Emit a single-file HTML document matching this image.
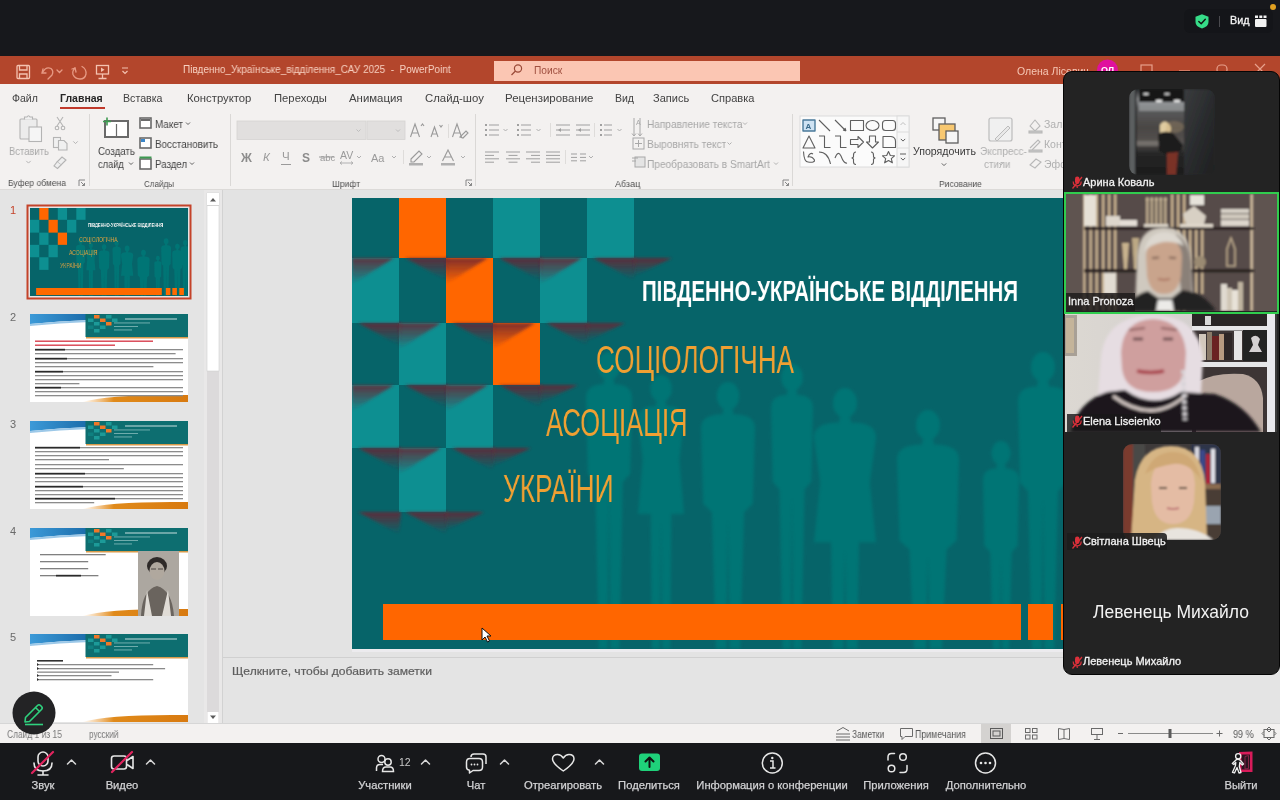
<!DOCTYPE html>
<html><head><meta charset="utf-8"><title>PowerPoint - Zoom</title>
<style>
*{margin:0;padding:0;box-sizing:border-box}
html,body{width:1280px;height:800px;overflow:hidden;background:#16161a;font-family:"Liberation Sans", sans-serif}
.r{position:absolute}
.t{position:absolute;white-space:nowrap;line-height:1;font-family:"Liberation Sans", sans-serif;will-change:transform}
</style></head><body>
<div class="r" style="left:0px;top:0px;width:1280px;height:56px;background:#17181c;"></div>
<div class="r" style="left:0px;top:56px;width:1280px;height:28px;background:#b3462c;"></div>
<div class="r" style="left:0px;top:84px;width:1280px;height:106px;background:#f3f1f0;"></div>
<div class="r" style="left:0px;top:189px;width:1280px;height:1px;background:#dcdad8;"></div>
<div class="r" style="left:0px;top:190px;width:1280px;height:535px;background:#e3e3e3;"></div>
<div class="r" style="left:0px;top:190px;width:221px;height:535px;background:#e4e4e4;"></div>
<div class="r" style="left:222px;top:657px;width:1058px;height:67px;background:#e4e4e4;"></div>
<div class="r" style="left:222px;top:657px;width:1058px;height:1px;background:#d0d0d0;"></div>
<div class="r" style="left:0px;top:743px;width:1280px;height:57px;background:#17181b;"></div>
<svg class="r" style="left:0;top:0" width="1280" height="56"><rect x="1184" y="9" width="89" height="24" rx="6" fill="#141519"/><path d="M1202 14.3 L1208.5 16.8 L1208.5 22 Q1208.5 26.5 1202 28.5 Q1195.5 26.5 1195.5 22 L1195.5 16.8 Z" fill="#36dc88"/><path d="M1198.8 21.5 L1201.2 23.8 L1205.3 19.2" fill="none" stroke="#111" stroke-width="1.4" stroke-linecap="round" stroke-linejoin="round"/><rect x="1219" y="16" width="1" height="11" fill="#4a4a4e"/><g fill="#f2f2f2"><rect x="1255" y="19" width="11.5" height="8" rx="1"/><rect x="1255" y="15.5" width="3" height="2.5"/><rect x="1259.3" y="15.5" width="3" height="2.5"/><rect x="1263.5" y="15.5" width="3" height="2.5"/></g><circle cx="1273" cy="7" r="3" fill="#e0a020"/></svg>
<div class="t" style="left:1229.6px;top:15.46px;font-size:10.8px;color:#f4f4f4;-webkit-text-stroke:0.3px #f4f4f4;">Вид</div>
<svg class="r" style="left:0;top:56px" width="1280" height="28" viewBox="0 56 1280 28"><g fill="none" stroke="#f4c2b0" stroke-width="1.3"><rect x="17" y="65.5" width="12.5" height="13" rx="1"/><path d="M19.5 65.5 L19.5 70 L27 70 L27 65.5 M19.5 78.5 L19.5 74 L27 74 L27 78.5"/></g><g fill="none" stroke="#e79a84" stroke-width="1.3" stroke-linecap="round"><path d="M43 69 L42 73 L46 73"/><path d="M42.5 72.5 Q46 66 51 68.5 Q54 71 52 75 L48 79"/><path d="M57 70 L59.5 72.5 L62 70"/></g><g fill="none" stroke="#e79a84" stroke-width="1.3" stroke-linecap="round"><path d="M75 68 Q72 71 73 74.5 Q75 79 80 79 Q85 79 86 74 Q86.5 69 82 66.5"/><path d="M75 68 L76 72 M75 68 L72 69"/></g><g fill="none" stroke="#f4c2b0" stroke-width="1.3"><rect x="96.5" y="65.5" width="12" height="8.5"/><path d="M102.5 74 L102.5 78 M98.5 78.5 L106.5 78.5"/></g><path d="M101 67.5 L104.5 69.7 L101 72 Z" fill="#f4c2b0"/><path d="M122 68 L128 68 M122.5 71 L125 73.5 L127.5 71" fill="none" stroke="#f4c2b0" stroke-width="1.2"/><rect x="494" y="61" width="306" height="20" fill="#fbc6b3"/><g fill="none" stroke="#9a4a38" stroke-width="1.2"><circle cx="518" cy="68.5" r="3.6"/><path d="M515.5 71 L511.5 75"/></g><circle cx="1107.5" cy="70" r="10.5" fill="#e0109e"/><g fill="none" stroke="#e7a08c" stroke-width="1.2"><rect x="1141" y="65" width="11" height="9"/><path d="M1179 71 L1190 71"/><rect x="1217" y="65" width="10" height="9" rx="4"/><path d="M1255 64 L1265 74 M1265 64 L1255 74"/></g></svg>
<div class="t" style="left:183px;top:65.33px;font-size:10px;color:#f7d0c0;transform:scaleX(0.9954407294832828);transform-origin:0 0;">Південно_Українське_відділення_САУ 2025&nbsp; -&nbsp; PowerPoint</div>
<div class="t" style="left:534px;top:65.87px;font-size:10.2px;color:#a05040;">Поиск</div>
<div class="t" style="left:1016.8px;top:65.71px;font-size:10.5px;color:#f6c8b6;">Олена Лісевич</div>
<div class="t" style="left:1100.5px;top:66.38px;font-size:9px;color:#ffffff;font-weight:bold;">ОЛ</div>
<div class="t" style="left:12px;top:93.01px;font-size:10.5px;color:#424242;">Файл</div>
<div class="t" style="left:60.3px;top:93.01px;font-size:10.5px;color:#262626;font-weight:bold;transform:scaleX(0.9976580796252927);transform-origin:0 0;">Главная</div>
<div class="t" style="left:123.2px;top:93.01px;font-size:10.5px;color:#424242;transform:scaleX(1.0128205128205128);transform-origin:0 0;">Вставка</div>
<div class="t" style="left:186.5px;top:93.01px;font-size:10.5px;color:#424242;transform:scaleX(1.0751252086811354);transform-origin:0 0;">Конструктор</div>
<div class="t" style="left:273.8px;top:93.01px;font-size:10.5px;color:#424242;transform:scaleX(1.073170731707317);transform-origin:0 0;">Переходы</div>
<div class="t" style="left:348.9px;top:93.01px;font-size:10.5px;color:#424242;transform:scaleX(1.0851926977687627);transform-origin:0 0;">Анимация</div>
<div class="t" style="left:425.1px;top:93.01px;font-size:10.5px;color:#424242;transform:scaleX(1.0808823529411764);transform-origin:0 0;">Слайд-шоу</div>
<div class="t" style="left:504.7px;top:93.01px;font-size:10.5px;color:#424242;transform:scaleX(1.091245376078915);transform-origin:0 0;">Рецензирование</div>
<div class="t" style="left:614.6px;top:93.01px;font-size:10.5px;color:#424242;transform:scaleX(0.9842105263157894);transform-origin:0 0;">Вид</div>
<div class="t" style="left:653.2px;top:93.01px;font-size:10.5px;color:#424242;transform:scaleX(1.0492753623188407);transform-origin:0 0;">Запись</div>
<div class="t" style="left:710.5px;top:93.01px;font-size:10.5px;color:#424242;transform:scaleX(1.0558252427184465);transform-origin:0 0;">Справка</div>
<div class="r" style="left:60px;top:107px;width:44.5px;height:2px;background:#c0392b;"></div>
<svg class="r" style="left:0;top:0" width="1280" height="200"><rect x="89" y="114" width="1" height="72" fill="#dad8d6"/><rect x="230" y="114" width="1" height="72" fill="#dad8d6"/><rect x="475" y="114" width="1" height="72" fill="#dad8d6"/><rect x="792" y="114" width="1" height="72" fill="#dad8d6"/><g fill="#ececec" stroke="#b4b4b4" stroke-width="1.1"><rect x="20" y="119" width="17" height="20" rx="1"/><rect x="29" y="127" width="12.5" height="14.5" fill="#f5f5f5"/></g><path d="M24.5 119.5 L24.5 117 L27 117 Q28.5 114.5 30 117 L32.5 117 L32.5 119.5" fill="#f0f0f0" stroke="#b4b4b4" stroke-width="1.1"/><path d="M26.3 160.9 L28.5 163.1 L30.7 160.9" fill="none" stroke="#b4b4b4" stroke-width="1"/><g fill="none" stroke="#b4b4b4" stroke-width="1.1"><path d="M57 117 L63 126 M63 117 L57 126"/><circle cx="57" cy="128" r="1.8"/><circle cx="63" cy="128" r="1.8"/></g><g fill="#f0f0f0" stroke="#b4b4b4" stroke-width="1.1"><rect x="53.5" y="137.5" width="7" height="10"/><path d="M58.5 140.5 L64 140.5 L67 143.5 L67 150 L58.5 150 Z"/></g><path d="M73.3 141.4 L75.5 143.6 L77.7 141.4" fill="none" stroke="#b4b4b4" stroke-width="1"/><g fill="#eeeeee" stroke="#b4b4b4" stroke-width="1.1"><path d="M62 157 L66 160 L61 165 L57 162 Z"/><path d="M57 162 L54 166 L57.5 168.5 L61 165"/></g><g fill="none" stroke="#7a7a7a" stroke-width="0.9"><path d="M79 186 L79 180 L85 180"/><path d="M81 182 L84.5 185.5 M84.5 183 L84.5 185.5 L82 185.5"/></g><g fill="#ffffff" stroke="#6a6a6a" stroke-width="2"><rect x="105" y="121" width="23" height="16"/></g><path d="M116.5 124 L116.5 136" stroke="#6a6a6a" stroke-width="1.2"/><path d="M103 121.5 L111 121.5 M107 117.5 L107 125.5" stroke="#3d9a50" stroke-width="1.6"/><path d="M129 162.5 L131 164.5 L133 162.5" fill="none" stroke="#5f5f5f" stroke-width="1"/><g fill="#ffffff" stroke="#6a6a6a" stroke-width="1.6"><rect x="140" y="118" width="11" height="10"/></g><rect x="141" y="119" width="9" height="2" fill="#6a6a6a"/><g fill="#ffffff" stroke="#6a6a6a" stroke-width="1.6"><rect x="140" y="138" width="11" height="10"/></g><path d="M141 139 L145 139 L145 142 L141 142 Z" fill="#3a86c8"/><g fill="#ffffff" stroke="#6a6a6a" stroke-width="1.6"><rect x="140" y="159" width="11" height="10"/></g><rect x="139.5" y="156.5" width="12" height="2" fill="#3d9a50"/><path d="M186 122.5 L188 124.5 L190 122.5" fill="none" stroke="#5f5f5f" stroke-width="1"/><path d="M190 162.5 L192 164.5 L194 162.5" fill="none" stroke="#5f5f5f" stroke-width="1"/><rect x="237" y="121" width="129" height="18.5" fill="#e1dfde" stroke="#d5d3d1" stroke-width="0.8"/><rect x="367" y="121" width="38" height="18.5" fill="#e1dfde" stroke="#d5d3d1" stroke-width="0.8"/><path d="M356.5 129.5 L358.5 131.5 L360.5 129.5" fill="none" stroke="#bdbdbd" stroke-width="1"/><path d="M396 129.5 L398 131.5 L400 129.5" fill="none" stroke="#bdbdbd" stroke-width="1"/><g fill="none" stroke="#9a9a9a" stroke-width="1.1"><path d="M410.5 137 L415 124 L419.5 137 M412 133 L418 133"/><path d="M421 126 L422.5 124 L424 126"/><path d="M431 137 L434.5 127 L438 137 M432.2 134 L436.8 134"/><path d="M439.5 125 L441 127 L442.5 125"/><path d="M452.5 137 L457 124 L461.5 137 M454 133 L460 133"/><path d="M460 137 L466 131 L468 133 L463 138 Z"/></g><rect x="448" y="124" width="1" height="14" fill="#dedcda"/><rect x="403" y="150" width="1" height="14" fill="#dedcda"/></svg>
<div class="t" style="left:241px;top:151.84px;font-size:12px;color:#8c8c8c;font-weight:bold;">Ж</div>
<div class="t" style="left:263px;top:152.27px;font-size:11.5px;color:#9a9a9a;font-style:italic;">К</div>
<div class="t" style="left:282px;top:151.27px;font-size:11.5px;color:#9a9a9a;">Ч</div>
<div class="t" style="left:302px;top:151.84px;font-size:12px;color:#8c8c8c;font-weight:bold;">S</div>
<div class="t" style="left:320px;top:152.96px;font-size:9.5px;color:#9a9a9a;">abc</div>
<div class="t" style="left:340px;top:150.11px;font-size:10.5px;color:#9a9a9a;">AV</div>
<div class="t" style="left:371px;top:152.69px;font-size:11px;color:#9a9a9a;">Aa</div>
<div class="t" style="left:647px;top:119.11px;font-size:10.5px;color:#a6a6a6;transform:scaleX(0.9591836734693877);transform-origin:0 0;">Направление текста</div>
<div class="t" style="left:647px;top:139.11px;font-size:10.5px;color:#a6a6a6;transform:scaleX(0.968944099378882);transform-origin:0 0;">Выровнять текст</div>
<div class="t" style="left:647px;top:159.11px;font-size:10.5px;color:#a6a6a6;transform:scaleX(0.9647058823529412);transform-origin:0 0;">Преобразовать в SmartArt</div>
<svg class="r" style="left:0;top:0" width="1280" height="200"><path d="M281 164.5 L291 164.5" stroke="#9a9a9a" stroke-width="1"/><path d="M319 157 L334 157" stroke="#9a9a9a" stroke-width="1"/><path d="M340 163 L353 163 M340 163 L342 161.5 M340 163 L342 164.5 M353 163 L351 161.5 M353 163 L351 164.5" stroke="#aaa" stroke-width="0.9"/><path d="M357 156.0 L359 158.0 L361 156.0" fill="none" stroke="#b0b0b0" stroke-width="1"/><path d="M392 156.0 L394 158.0 L396 156.0" fill="none" stroke="#b0b0b0" stroke-width="1"/><g fill="none" stroke="#9a9a9a" stroke-width="1.1"><path d="M411 159 L419 151 L422 154 L414 162 L411 162 Z"/></g><rect x="409" y="163" width="14" height="2.5" fill="#b0b0b0"/><path d="M427 156.0 L429 158.0 L431 156.0" fill="none" stroke="#b0b0b0" stroke-width="1"/><path d="M442.5 161 L448 150 L453.5 161 M444.5 157 L451.5 157" fill="none" stroke="#9a9a9a" stroke-width="1.1"/><rect x="441" y="163" width="14" height="2.5" fill="#b0b0b0"/><path d="M461 156.0 L463 158.0 L465 156.0" fill="none" stroke="#b0b0b0" stroke-width="1"/><g fill="none" stroke="#7a7a7a" stroke-width="0.9"><path d="M466 186 L466 180 L472 180"/><path d="M468 182 L471.5 185.5 M471.5 183 L471.5 185.5 L469 185.5"/></g><rect x="485" y="124" width="2" height="2" fill="#a0a0a0"/><rect x="489" y="124.5" width="10" height="1" fill="#a0a0a0"/><rect x="485" y="129" width="2" height="2" fill="#a0a0a0"/><rect x="489" y="129.5" width="10" height="1" fill="#a0a0a0"/><rect x="485" y="134" width="2" height="2" fill="#a0a0a0"/><rect x="489" y="134.5" width="10" height="1" fill="#a0a0a0"/><path d="M503.5 129.0 L505.5 131.0 L507.5 129.0" fill="none" stroke="#b0b0b0" stroke-width="1"/><rect x="517" y="124" width="2" height="2" fill="#a0a0a0"/><rect x="521" y="124.5" width="10" height="1" fill="#a0a0a0"/><rect x="517" y="129" width="2" height="2" fill="#a0a0a0"/><rect x="521" y="129.5" width="10" height="1" fill="#a0a0a0"/><rect x="517" y="134" width="2" height="2" fill="#a0a0a0"/><rect x="521" y="134.5" width="10" height="1" fill="#a0a0a0"/><path d="M536.5 129.0 L538.5 131.0 L540.5 129.0" fill="none" stroke="#b0b0b0" stroke-width="1"/><rect x="550" y="123" width="1" height="14" fill="#dedcda"/><rect x="556" y="124.5" width="14" height="1" fill="#a0a0a0"/><rect x="556" y="129.5" width="14" height="1" fill="#a0a0a0"/><rect x="556" y="134.5" width="14" height="1" fill="#a0a0a0"/><rect x="576" y="124.5" width="14" height="1" fill="#a0a0a0"/><rect x="576" y="129.5" width="14" height="1" fill="#a0a0a0"/><rect x="576" y="134.5" width="14" height="1" fill="#a0a0a0"/><path d="M558 130 L561 128 L561 132 Z M578 130 L581 128 L581 132 Z" fill="#a0a0a0"/><rect x="594" y="123" width="1" height="14" fill="#dedcda"/><rect x="600" y="124" width="2" height="2" fill="#a0a0a0"/><rect x="604" y="124.5" width="8" height="1" fill="#a0a0a0"/><rect x="600" y="129" width="2" height="2" fill="#a0a0a0"/><rect x="604" y="129.5" width="8" height="1" fill="#a0a0a0"/><rect x="600" y="134" width="2" height="2" fill="#a0a0a0"/><rect x="604" y="134.5" width="8" height="1" fill="#a0a0a0"/><path d="M617.5 129.0 L619.5 131.0 L621.5 129.0" fill="none" stroke="#b0b0b0" stroke-width="1"/><rect x="485" y="151.5" width="14" height="1" fill="#a0a0a0"/><rect x="485" y="154.9" width="9" height="1" fill="#a0a0a0"/><rect x="485" y="158.3" width="14" height="1" fill="#a0a0a0"/><rect x="485" y="161.7" width="9" height="1" fill="#a0a0a0"/><rect x="506.0" y="151.5" width="14" height="1" fill="#a0a0a0"/><rect x="508.5" y="154.9" width="9" height="1" fill="#a0a0a0"/><rect x="506.0" y="158.3" width="14" height="1" fill="#a0a0a0"/><rect x="508.5" y="161.7" width="9" height="1" fill="#a0a0a0"/><rect x="526" y="151.5" width="14" height="1" fill="#a0a0a0"/><rect x="531" y="154.9" width="9" height="1" fill="#a0a0a0"/><rect x="526" y="158.3" width="14" height="1" fill="#a0a0a0"/><rect x="531" y="161.7" width="9" height="1" fill="#a0a0a0"/><rect x="546" y="151.5" width="14" height="1" fill="#a0a0a0"/><rect x="546" y="154.9" width="14" height="1" fill="#a0a0a0"/><rect x="546" y="158.3" width="14" height="1" fill="#a0a0a0"/><rect x="546" y="161.7" width="14" height="1" fill="#a0a0a0"/><rect x="565" y="150" width="1" height="14" fill="#dedcda"/><rect x="571" y="153.5" width="6" height="1" fill="#a0a0a0"/><rect x="571" y="156.9" width="6" height="1" fill="#a0a0a0"/><rect x="571" y="160.3" width="6" height="1" fill="#a0a0a0"/><rect x="580" y="153.5" width="6" height="1" fill="#a0a0a0"/><rect x="580" y="156.9" width="6" height="1" fill="#a0a0a0"/><rect x="580" y="160.3" width="6" height="1" fill="#a0a0a0"/><path d="M589 156.0 L591 158.0 L593 156.0" fill="none" stroke="#b0b0b0" stroke-width="1"/><g fill="none" stroke="#a8a8a8" stroke-width="1"><path d="M634 118 L634 136 M632 133.5 L634 136 L636 133.5 M640 118 L640 136 M638 133.5 L640 136 L642 133.5"/><rect x="633" y="138" width="11" height="11"/><path d="M638.5 140 L638.5 147 M635 143.5 L642 143.5"/><rect x="635" y="157" width="10" height="10" fill="#e4e4e4"/><path d="M632 158 L638 158 M632 161 L636 161"/></g><text x="636" y="125" font-family="Liberation Sans" font-size="7" fill="#a8a8a8">A</text><path d="M743 122.5 L745 124.5 L747 122.5" fill="none" stroke="#b0b0b0" stroke-width="1"/><path d="M727.5 142.5 L729.5 144.5 L731.5 142.5" fill="none" stroke="#b0b0b0" stroke-width="1"/><path d="M774 162.5 L776 164.5 L778 162.5" fill="none" stroke="#b0b0b0" stroke-width="1"/><g fill="none" stroke="#7a7a7a" stroke-width="0.9"><path d="M783 186 L783 180 L789 180"/><path d="M785 182 L788.5 185.5 M788.5 183 L788.5 185.5 L786 185.5"/></g><rect x="800" y="116" width="109" height="51" fill="#fbfbfb" stroke="#dcdcdc" stroke-width="1"/><rect x="897" y="116" width="12" height="51" fill="#f6f6f6" stroke="#dcdcdc" stroke-width="1"/><path d="M897 132 L909 132 M897 148 L909 148" stroke="#dcdcdc"/><path d="M900.5 125 L903 122.5 L905.5 125" fill="none" stroke="#c0c0c0"/><path d="M900.8 138.9 L903 141.1 L905.2 138.9" fill="none" stroke="#5f5f5f" stroke-width="1"/><path d="M900.8 157.9 L903 160.1 L905.2 157.9" fill="none" stroke="#5f5f5f" stroke-width="1"/><rect x="900" y="153.5" width="6" height="1" fill="#5f5f5f"/><g fill="none" stroke="#5f5f5f" stroke-width="1.1" stroke-linejoin="round"><rect x="803" y="120" width="12" height="11" fill="#cfe3f3" stroke="#4a7a9a" stroke-width="1.4"/><path d="M819 120 L830 131"/><path d="M835 120 L846 131 M846 131 L843 130 M846 131 L845 128"/><rect x="850.5" y="120.5" width="13" height="10"/><ellipse cx="872.5" cy="125.5" rx="6.5" ry="5"/><rect x="882.5" y="120.5" width="13" height="10" rx="3"/><path d="M803 148 L809 136 L815 148 Z"/><path d="M819 136 L824.5 136 L824.5 147.5 L830.5 147.5"/><path d="M835 136 L840.5 136 L840.5 147.5 L846.5 147.5"/><path d="M850.5 139.5 L858 139.5 L858 136.5 L863.5 142 L858 147.5 L858 144.5 L850.5 144.5 Z"/><path d="M869.5 136 L875.5 136 L875.5 142 L878.5 142 L872.5 148 L866.5 142 L869.5 142 Z"/><path d="M883 136.5 L891 136.5 Q895.5 137 895.5 141.5 L895.5 147.5 L883 147.5 Z"/><path d="M803.5 151.5 Q804 162 808 162 Q815 163 814.5 160 Q812 156 808 157 Q810 152 813 154"/><path d="M819 152 Q828 152 830.5 164"/><path d="M835 158 Q838 150 841 156 Q844 164 847 163"/><path d="M856 152 Q853.5 152 853.5 155 L853.5 157 L852 158 L853.5 159 L853.5 162 Q853.5 164.5 856 164.5"/><path d="M871 152 Q873.5 152 873.5 155 L873.5 157 L875 158 L873.5 159 L873.5 162 Q873.5 164.5 871 164.5"/><path d="M888.5 151.5 L890.3 155.5 L894.5 155.8 L891.3 158.6 L892.4 162.8 L888.5 160.5 L884.6 162.8 L885.7 158.6 L882.5 155.8 L886.7 155.5 Z"/></g><text x="805.5" y="129" font-family="Liberation Sans" font-weight="bold" font-size="8" fill="#3a6a8a">A</text><g stroke="#5f5f5f" stroke-width="1.3"><rect x="933" y="118" width="12" height="12" fill="#f6f6f6"/><rect x="939" y="124" width="16" height="16" fill="#f8c870"/><rect x="946" y="131" width="12" height="12" fill="#f6f6f6"/></g><path d="M941.8 163.4 L944 165.6 L946.2 163.4" fill="none" stroke="#5f5f5f" stroke-width="1"/><g fill="#f0f0f0" stroke="#bcbcbc" stroke-width="1.2"><rect x="989" y="118" width="23" height="23" rx="2"/></g><path d="M995 139 L1008 126 L1010 128 L997 141 Z" fill="#e8e8e8" stroke="#bcbcbc"/><path d="M999 163.0 L1001 165.0 L1003 163.0" fill="none" stroke="#c0c0c0" stroke-width="1"/><g fill="none" stroke="#b8b8b8" stroke-width="1.1"><path d="M1030 126 L1035 120 L1040 126 L1035 131 Z"/><rect x="1029" y="131" width="13" height="2" fill="#c8c8c8"/><path d="M1030 148 L1038 140 L1040 142 L1032 150"/><rect x="1029" y="150" width="13" height="2" fill="#c8c8c8"/><path d="M1030 165 L1036 159 L1041 162 L1035 168 Z"/></g></svg>
<div class="t" style="left:9px;top:145.61px;font-size:10.5px;color:#a9a9a9;transform:scaleX(0.896551724137931);transform-origin:0 0;">Вставить</div>
<div class="t" style="left:8px;top:178.46px;font-size:9.5px;color:#505050;transform:scaleX(0.8978328173374613);transform-origin:0 0;">Буфер обмена</div>
<div class="t" style="left:97.6px;top:146.11px;font-size:10.5px;color:#444444;transform:scaleX(0.9262086513994912);transform-origin:0 0;">Создать</div>
<div class="t" style="left:98px;top:159.11px;font-size:10.5px;color:#444444;transform:scaleX(0.8813559322033898);transform-origin:0 0;">слайд</div>
<div class="t" style="left:155px;top:119.11px;font-size:10.5px;color:#444444;transform:scaleX(0.9395973154362416);transform-origin:0 0;">Макет</div>
<div class="t" style="left:155px;top:139.41px;font-size:10.5px;color:#444444;transform:scaleX(0.9375);transform-origin:0 0;">Восстановить</div>
<div class="t" style="left:155px;top:159.11px;font-size:10.5px;color:#444444;transform:scaleX(0.9253731343283582);transform-origin:0 0;">Раздел</div>
<div class="t" style="left:144px;top:178.96px;font-size:9.5px;color:#505050;transform:scaleX(0.8474576271186441);transform-origin:0 0;">Слайды</div>
<div class="t" style="left:332px;top:178.96px;font-size:9.5px;color:#505050;transform:scaleX(0.8974358974358975);transform-origin:0 0;">Шрифт</div>
<div class="t" style="left:615px;top:178.96px;font-size:9.5px;color:#505050;transform:scaleX(0.946969696969697);transform-origin:0 0;">Абзац</div>
<div class="t" style="left:913px;top:146.11px;font-size:10.5px;color:#3a3a3a;transform:scaleX(1.0064935064935066);transform-origin:0 0;">Упорядочить</div>
<div class="t" style="left:980px;top:146.11px;font-size:10.5px;color:#b0b0b0;transform:scaleX(0.9615384615384616);transform-origin:0 0;">Экспресс-</div>
<div class="t" style="left:984px;top:159.11px;font-size:10.5px;color:#b0b0b0;transform:scaleX(0.9454545454545454);transform-origin:0 0;">стили</div>
<div class="t" style="left:939px;top:178.96px;font-size:9.5px;color:#505050;transform:scaleX(0.8958333333333334);transform-origin:0 0;">Рисование</div>
<div class="t" style="left:1044px;top:119.11px;font-size:10.5px;color:#b0b0b0;">Заливка</div>
<div class="t" style="left:1044px;top:139.11px;font-size:10.5px;color:#b0b0b0;">Контур</div>
<div class="t" style="left:1044px;top:159.11px;font-size:10.5px;color:#b0b0b0;">Эффекты</div>
<svg class="r" style="left:352px;top:198px;" width="802" height="451" viewBox="0 0 802 451"><defs><linearGradient id="sh" x1="0" y1="0" x2="0" y2="1"><stop offset="0" stop-color="#6a2432" stop-opacity="0.85"/><stop offset="1" stop-color="#6a2432" stop-opacity="0"/></linearGradient><linearGradient id="shd" x1="0" y1="0" x2="1" y2="1"><stop offset="0" stop-color="#6a2a20" stop-opacity="0.9"/><stop offset="0.6" stop-color="#6a2a20" stop-opacity="0"/></linearGradient><filter id="bl" x="-20%" y="-20%" width="140%" height="140%"><feGaussianBlur stdDeviation="1.6"/></filter><filter id="bl2" x="-20%" y="-30%" width="140%" height="160%"><feGaussianBlur stdDeviation="1.8"/></filter></defs><rect width="802" height="451" fill="#066469"/><g fill="#047575" filter="url(#bl)"><ellipse cx="257" cy="168.0" rx="11.2" ry="14.0"/><path d="M252.5 179.2 L261.5 179.2 L262.6 186.2 Q280.0 186.2 280.0 200.2 L278.2 275.8 L270.8 284.2 L267.4 451 L258.4 451 L257.0 289.8 L255.6 451 L246.7 451 L243.2 284.2 L235.8 275.8 L234.0 200.2 Q234.0 186.2 251.4 186.2 Z"/><ellipse cx="309" cy="190.5" rx="10.8" ry="13.5"/><path d="M304.7 201.3 L313.3 201.3 L314.4 208.1 Q332.0 208.1 332.0 221.6 L327.4 262.1 L332.0 316.1 L319.4 316.1 L318.2 451 L310.1 451 L309.0 321.5 L307.9 451 L299.8 451 L298.6 316.1 L286.0 316.1 L290.6 262.1 L286.0 221.6 Q286.0 208.1 303.6 208.1 Z"/><ellipse cx="376" cy="198.0" rx="11.2" ry="14.0"/><path d="M371.5 209.2 L380.5 209.2 L381.6 216.2 Q403.0 216.2 403.0 230.2 L400.8 305.8 L392.2 314.2 L388.1 451 L377.6 451 L376.0 319.8 L374.4 451 L363.9 451 L359.8 314.2 L351.2 305.8 L349.0 230.2 Q349.0 216.2 370.4 216.2 Z"/><ellipse cx="440" cy="179.5" rx="10.8" ry="13.5"/><path d="M435.7 190.3 L444.3 190.3 L445.4 197.1 Q461.0 197.1 461.0 210.6 L459.3 283.5 L452.6 291.6 L449.4 451 L441.3 451 L440.0 297.0 L438.7 451 L430.6 451 L427.4 291.6 L420.7 283.5 L419.0 210.6 Q419.0 197.1 434.6 197.1 Z"/><ellipse cx="493" cy="205.0" rx="12.0" ry="15.0"/><path d="M488.2 217.0 L497.8 217.0 L499.0 224.5 Q524.0 224.5 524.0 239.5 L517.8 284.5 L524.0 344.5 L506.9 344.5 L505.4 451 L494.6 451 L493.0 350.5 L491.4 451 L480.6 451 L479.1 344.5 L462.0 344.5 L468.2 284.5 L462.0 239.5 Q462.0 224.5 487.0 224.5 Z"/><ellipse cx="576" cy="227.0" rx="12.0" ry="15.0"/><path d="M571.2 239.0 L580.8 239.0 L582.0 246.5 Q607.0 246.5 607.0 261.5 L604.5 342.5 L594.6 351.5 L590.0 451 L577.9 451 L576.0 357.5 L574.1 451 L562.0 451 L557.4 351.5 L547.5 342.5 L545.0 261.5 Q545.0 246.5 570.0 246.5 Z"/><ellipse cx="649" cy="255.0" rx="9.6" ry="12.0"/><path d="M645.2 264.6 L652.8 264.6 L653.8 270.6 Q667.0 270.6 667.0 282.6 L665.6 347.4 L659.8 354.6 L657.1 451 L650.1 451 L649.0 359.4 L647.9 451 L640.9 451 L638.2 354.6 L632.4 347.4 L631.0 282.6 Q631.0 270.6 644.2 270.6 Z"/><ellipse cx="691" cy="169.0" rx="12.0" ry="15.0"/><path d="M686.2 181.0 L695.8 181.0 L697.0 188.5 Q716.0 188.5 716.0 203.5 L714.0 284.5 L706.0 293.5 L702.2 451 L692.5 451 L691.0 299.5 L689.5 451 L679.8 451 L676.0 293.5 L668.0 284.5 L666.0 203.5 Q666.0 188.5 685.0 188.5 Z"/><ellipse cx="748" cy="196.0" rx="11.2" ry="14.0"/><path d="M743.5 207.2 L752.5 207.2 L753.6 214.2 Q774.0 214.2 774.0 228.2 L771.9 303.8 L763.6 312.2 L759.7 451 L749.6 451 L748.0 317.8 L746.4 451 L736.3 451 L732.4 312.2 L724.1 303.8 L722.0 228.2 Q722.0 214.2 742.4 214.2 Z"/><ellipse cx="788" cy="176.0" rx="11.2" ry="14.0"/><path d="M783.5 187.2 L792.5 187.2 L793.6 194.2 Q811.0 194.2 811.0 208.2 L809.2 283.8 L801.8 292.2 L798.4 451 L789.4 451 L788.0 297.8 L786.6 451 L777.6 451 L774.2 292.2 L766.8 283.8 L765.0 208.2 Q765.0 194.2 782.4 194.2 Z"/></g><rect x="141" y="0" width="47" height="60" fill="#0d8f91"/><rect x="235" y="0" width="47" height="60" fill="#0d8f91"/><rect x="0" y="60" width="47" height="65" fill="#0d8f91"/><rect x="188" y="60" width="47" height="65" fill="#0d8f91"/><rect x="47" y="125" width="47" height="62" fill="#0d8f91"/><rect x="0" y="187" width="47" height="63" fill="#0d8f91"/><rect x="94" y="187" width="47" height="63" fill="#0d8f91"/><rect x="47" y="250" width="47" height="64" fill="#0d8f91"/><rect x="47" y="0" width="47" height="60" fill="#ff6600"/><rect x="94" y="60" width="47" height="65" fill="#ff6600"/><rect x="141" y="125" width="47" height="62" fill="#ff6600"/><path d="M0 60 L42 60 L0 86 Z" fill="url(#sh)" filter="url(#bl2)"/><path d="M53 60 L96 60 L94 82 Z" fill="url(#sh)" filter="url(#bl2)"/><path d="M94 60 L136 60 L94 86 Z" fill="url(#sh)" filter="url(#bl2)"/><path d="M147 60 L190 60 L188 82 Z" fill="url(#sh)" filter="url(#bl2)"/><path d="M188 60 L230 60 L188 86 Z" fill="url(#sh)" filter="url(#bl2)"/><path d="M241 60 L284 60 L282 82 Z" fill="url(#sh)" filter="url(#bl2)"/><path d="M282 60 L320 60 L282 78 Z" fill="url(#sh)" filter="url(#bl2)"/><path d="M6 125 L49 125 L47 147 Z" fill="url(#sh)" filter="url(#bl2)"/><path d="M47 125 L89 125 L47 151 Z" fill="url(#sh)" filter="url(#bl2)"/><path d="M100 125 L143 125 L141 147 Z" fill="url(#sh)" filter="url(#bl2)"/><path d="M141 125 L183 125 L141 151 Z" fill="url(#sh)" filter="url(#bl2)"/><path d="M194 125 L237 125 L235 147 Z" fill="url(#sh)" filter="url(#bl2)"/><path d="M235 125 L273 125 L235 143 Z" fill="url(#sh)" filter="url(#bl2)"/><path d="M0 187 L42 187 L0 213 Z" fill="url(#sh)" filter="url(#bl2)"/><path d="M53 187 L96 187 L94 209 Z" fill="url(#sh)" filter="url(#bl2)"/><path d="M94 187 L136 187 L94 213 Z" fill="url(#sh)" filter="url(#bl2)"/><path d="M147 187 L190 187 L188 209 Z" fill="url(#sh)" filter="url(#bl2)"/><path d="M188 187 L226 187 L188 205 Z" fill="url(#sh)" filter="url(#bl2)"/><path d="M6 250 L49 250 L47 272 Z" fill="url(#sh)" filter="url(#bl2)"/><path d="M47 250 L89 250 L47 276 Z" fill="url(#sh)" filter="url(#bl2)"/><path d="M100 250 L143 250 L141 272 Z" fill="url(#sh)" filter="url(#bl2)"/><path d="M141 250 L179 250 L141 268 Z" fill="url(#sh)" filter="url(#bl2)"/><path d="M6 314 L49 314 L47 336 Z" fill="url(#sh)" filter="url(#bl2)"/><path d="M53 314 L96 314 L94 336 Z" fill="url(#sh)" filter="url(#bl2)"/><path d="M94 314 L132 314 L94 332 Z" fill="url(#sh)" filter="url(#bl2)"/><rect x="31" y="406" width="638" height="36" fill="#ff6600"/><rect x="676" y="406" width="25" height="36" fill="#ff6600"/><rect x="709" y="406" width="25" height="36" fill="#ff6600"/><rect x="742" y="406" width="25" height="36" fill="#ff6600"/></svg>
<div class="t" style="left:642px;top:276.31px;font-size:30px;color:#ffffff;font-weight:bold;transform:scaleX(0.6810360441948922);transform-origin:0 0;">ПІВДЕННО-УКРАЇНСЬКЕ ВІДДІЛЕННЯ</div>
<div class="t" style="left:596px;top:340.83px;font-size:38px;color:#f0a032;transform:scaleX(0.6882168925964547);transform-origin:0 0;">СОЦІОЛОГІЧНА</div>
<div class="t" style="left:545.5px;top:403.83px;font-size:38px;color:#f0a032;transform:scaleX(0.6712523719165086);transform-origin:0 0;">АСОЦІАЦІЯ</div>
<div class="t" style="left:502.5px;top:469.83px;font-size:38px;color:#f0a032;transform:scaleX(0.6914893617021276);transform-origin:0 0;">УКРАЇНИ</div>
<svg class="r" style="left:481px;top:627px" width="12" height="16" viewBox="0 0 12 16"><path d="M1 1 L1 13 L4 10 L6.5 15 L8.5 14 L6 9 L10 9 Z" fill="#ffffff" stroke="#111" stroke-width="1"/></svg>
<div class="r" style="left:352px;top:649px;width:711px;height:3px;background:#ecebee;"></div>
<svg class="r" style="left:0;top:0" width="240" height="745"><defs><linearGradient id="bw" x1="0" x2="1"><stop offset="0" stop-color="#3c9ad8"/><stop offset="1" stop-color="#1a6aa8"/></linearGradient><linearGradient id="ow" x1="0" x2="1"><stop offset="0" stop-color="#f0a040" stop-opacity="0"/><stop offset="0.3" stop-color="#e08a1a"/><stop offset="1" stop-color="#d87a10"/></linearGradient></defs><rect x="27.5" y="205.5" width="163" height="93" fill="none" stroke="#c4432a" stroke-width="2"/><rect x="30" y="208" width="158" height="88" fill="#066469"/><rect x="57.78" y="208.00" width="9.26" height="11.82" fill="#0d8f91"/><rect x="76.30" y="208.00" width="9.26" height="11.82" fill="#0d8f91"/><rect x="30.00" y="219.82" width="9.26" height="12.81" fill="#0d8f91"/><rect x="67.04" y="219.82" width="9.26" height="12.81" fill="#0d8f91"/><rect x="39.26" y="232.63" width="9.26" height="12.21" fill="#0d8f91"/><rect x="30.00" y="244.84" width="9.26" height="12.41" fill="#0d8f91"/><rect x="48.52" y="244.84" width="9.26" height="12.41" fill="#0d8f91"/><rect x="39.26" y="257.25" width="9.26" height="12.61" fill="#0d8f91"/><rect x="39.26" y="208.00" width="9.26" height="11.82" fill="#ff6600"/><rect x="48.52" y="219.82" width="9.26" height="12.81" fill="#ff6600"/><rect x="57.78" y="232.63" width="9.26" height="12.21" fill="#ff6600"/><clipPath id="tc1"><rect x="30" y="208" width="158" height="88"/></clipPath><g clip-path="url(#tc1)"><g transform="translate(30,208) scale(0.1970)"><g fill="#047575" filter="url(#bl)"><ellipse cx="257" cy="168.0" rx="11.2" ry="14.0"/><path d="M252.5 179.2 L261.5 179.2 L262.6 186.2 Q280.0 186.2 280.0 200.2 L278.2 275.8 L270.8 284.2 L267.4 451 L258.4 451 L257.0 289.8 L255.6 451 L246.7 451 L243.2 284.2 L235.8 275.8 L234.0 200.2 Q234.0 186.2 251.4 186.2 Z"/><ellipse cx="309" cy="190.5" rx="10.8" ry="13.5"/><path d="M304.7 201.3 L313.3 201.3 L314.4 208.1 Q332.0 208.1 332.0 221.6 L327.4 262.1 L332.0 316.1 L319.4 316.1 L318.2 451 L310.1 451 L309.0 321.5 L307.9 451 L299.8 451 L298.6 316.1 L286.0 316.1 L290.6 262.1 L286.0 221.6 Q286.0 208.1 303.6 208.1 Z"/><ellipse cx="376" cy="198.0" rx="11.2" ry="14.0"/><path d="M371.5 209.2 L380.5 209.2 L381.6 216.2 Q403.0 216.2 403.0 230.2 L400.8 305.8 L392.2 314.2 L388.1 451 L377.6 451 L376.0 319.8 L374.4 451 L363.9 451 L359.8 314.2 L351.2 305.8 L349.0 230.2 Q349.0 216.2 370.4 216.2 Z"/><ellipse cx="440" cy="179.5" rx="10.8" ry="13.5"/><path d="M435.7 190.3 L444.3 190.3 L445.4 197.1 Q461.0 197.1 461.0 210.6 L459.3 283.5 L452.6 291.6 L449.4 451 L441.3 451 L440.0 297.0 L438.7 451 L430.6 451 L427.4 291.6 L420.7 283.5 L419.0 210.6 Q419.0 197.1 434.6 197.1 Z"/><ellipse cx="493" cy="205.0" rx="12.0" ry="15.0"/><path d="M488.2 217.0 L497.8 217.0 L499.0 224.5 Q524.0 224.5 524.0 239.5 L517.8 284.5 L524.0 344.5 L506.9 344.5 L505.4 451 L494.6 451 L493.0 350.5 L491.4 451 L480.6 451 L479.1 344.5 L462.0 344.5 L468.2 284.5 L462.0 239.5 Q462.0 224.5 487.0 224.5 Z"/><ellipse cx="576" cy="227.0" rx="12.0" ry="15.0"/><path d="M571.2 239.0 L580.8 239.0 L582.0 246.5 Q607.0 246.5 607.0 261.5 L604.5 342.5 L594.6 351.5 L590.0 451 L577.9 451 L576.0 357.5 L574.1 451 L562.0 451 L557.4 351.5 L547.5 342.5 L545.0 261.5 Q545.0 246.5 570.0 246.5 Z"/><ellipse cx="649" cy="255.0" rx="9.6" ry="12.0"/><path d="M645.2 264.6 L652.8 264.6 L653.8 270.6 Q667.0 270.6 667.0 282.6 L665.6 347.4 L659.8 354.6 L657.1 451 L650.1 451 L649.0 359.4 L647.9 451 L640.9 451 L638.2 354.6 L632.4 347.4 L631.0 282.6 Q631.0 270.6 644.2 270.6 Z"/><ellipse cx="691" cy="169.0" rx="12.0" ry="15.0"/><path d="M686.2 181.0 L695.8 181.0 L697.0 188.5 Q716.0 188.5 716.0 203.5 L714.0 284.5 L706.0 293.5 L702.2 451 L692.5 451 L691.0 299.5 L689.5 451 L679.8 451 L676.0 293.5 L668.0 284.5 L666.0 203.5 Q666.0 188.5 685.0 188.5 Z"/><ellipse cx="748" cy="196.0" rx="11.2" ry="14.0"/><path d="M743.5 207.2 L752.5 207.2 L753.6 214.2 Q774.0 214.2 774.0 228.2 L771.9 303.8 L763.6 312.2 L759.7 451 L749.6 451 L748.0 317.8 L746.4 451 L736.3 451 L732.4 312.2 L724.1 303.8 L722.0 228.2 Q722.0 214.2 742.4 214.2 Z"/><ellipse cx="788" cy="176.0" rx="11.2" ry="14.0"/><path d="M783.5 187.2 L792.5 187.2 L793.6 194.2 Q811.0 194.2 811.0 208.2 L809.2 283.8 L801.8 292.2 L798.4 451 L789.4 451 L788.0 297.8 L786.6 451 L777.6 451 L774.2 292.2 L766.8 283.8 L765.0 208.2 Q765.0 194.2 782.4 194.2 Z"/></g></g></g><rect x="36.11" y="287.99" width="125.69" height="7.09" fill="#ff6a00"/><rect x="165.8" y="287.99" width="4.6" height="7.09" fill="#ff6a00"/><rect x="172.3" y="287.99" width="4.6" height="7.09" fill="#ff6a00"/><rect x="179.3" y="287.99" width="4.6" height="7.09" fill="#ff6a00"/><rect x="30" y="314" width="158" height="88" fill="#ffffff"/><path d="M30 314 L90 314 L90 320 Q60 321 30 324 Z" fill="url(#bw)"/><path d="M30 324 Q60 321 90 320 L90 322 Q60 323 30 326 Z" fill="#9cc8e8"/><rect x="85.5" y="314" width="102.5" height="23" fill="#0d6e70"/><rect x="86" y="337" width="102" height="1.5" fill="#d89a4a"/><rect x="94" y="315" width="5.5" height="3.5" fill="#f07828"/><rect x="100" y="318.5" width="5.5" height="3.5" fill="#f07828"/><rect x="106" y="322" width="5.5" height="3.5" fill="#f07828"/><rect x="88" y="318.5" width="5.5" height="3.5" fill="#1c9a98"/><rect x="94" y="322" width="5.5" height="3.5" fill="#1c9a98"/><rect x="100" y="325.5" width="5.5" height="3.5" fill="#1c9a98"/><rect x="88" y="325.5" width="5.5" height="3.5" fill="#0f8080"/><rect x="94" y="329" width="5.5" height="3.5" fill="#1c9a98"/><rect x="106" y="315" width="5.5" height="3.5" fill="#1c9a98"/><rect x="112" y="318.5" width="5.5" height="3.5" fill="#1c9a98"/><rect x="125" y="318.5" width="52" height="1" fill="#c8dede"/><rect x="114" y="322.5" width="36" height="0.9" fill="#7ab4b4"/><rect x="114" y="326" width="24" height="0.9" fill="#7ab4b4"/><rect x="114" y="329.5" width="18" height="0.9" fill="#7ab4b4"/><path d="M82 402 Q110 394 188 395 L188 402 Z" fill="url(#ow)"/><rect x="35" y="340.5" width="118" height="1.4" fill="#d8404e"/><rect x="35" y="344.5" width="80" height="1.4" fill="#d8404e"/><rect x="35" y="349.0" width="148.0" height="1.3" fill="#8c8c8c"/><rect x="35" y="353.0" width="140.6" height="1.3" fill="#8c8c8c"/><rect x="35" y="358.0" width="148.0" height="1.3" fill="#8c8c8c"/><rect x="35" y="362.0" width="148.0" height="1.3" fill="#8c8c8c"/><rect x="35" y="366.0" width="118.4" height="1.3" fill="#8c8c8c"/><rect x="35" y="371.0" width="148.0" height="1.3" fill="#8c8c8c"/><rect x="35" y="375.0" width="148.0" height="1.3" fill="#8c8c8c"/><rect x="35" y="379.0" width="148.0" height="1.3" fill="#8c8c8c"/><rect x="35" y="383.0" width="44.4" height="1.3" fill="#8c8c8c"/><rect x="35" y="387.0" width="148.0" height="1.3" fill="#8c8c8c"/><rect x="35" y="391.0" width="148.0" height="1.3" fill="#8c8c8c"/><rect x="35" y="395.0" width="148.0" height="1.3" fill="#8c8c8c"/><rect x="35" y="348.8" width="30" height="1.7" fill="#2a2a2a"/><rect x="35" y="357.8" width="32" height="1.7" fill="#2a2a2a"/><rect x="35" y="370.8" width="28" height="1.7" fill="#2a2a2a"/><rect x="35" y="386.8" width="26" height="1.7" fill="#2a2a2a"/><rect x="30" y="421" width="158" height="88" fill="#ffffff"/><path d="M30 421 L90 421 L90 427 Q60 428 30 431 Z" fill="url(#bw)"/><path d="M30 431 Q60 428 90 427 L90 429 Q60 430 30 433 Z" fill="#9cc8e8"/><rect x="85.5" y="421" width="102.5" height="23" fill="#0d6e70"/><rect x="86" y="444" width="102" height="1.5" fill="#d89a4a"/><rect x="94" y="422" width="5.5" height="3.5" fill="#f07828"/><rect x="100" y="425.5" width="5.5" height="3.5" fill="#f07828"/><rect x="106" y="429" width="5.5" height="3.5" fill="#f07828"/><rect x="88" y="425.5" width="5.5" height="3.5" fill="#1c9a98"/><rect x="94" y="429" width="5.5" height="3.5" fill="#1c9a98"/><rect x="100" y="432.5" width="5.5" height="3.5" fill="#1c9a98"/><rect x="88" y="432.5" width="5.5" height="3.5" fill="#0f8080"/><rect x="94" y="436" width="5.5" height="3.5" fill="#1c9a98"/><rect x="106" y="422" width="5.5" height="3.5" fill="#1c9a98"/><rect x="112" y="425.5" width="5.5" height="3.5" fill="#1c9a98"/><rect x="125" y="425.5" width="52" height="1" fill="#c8dede"/><rect x="114" y="429.5" width="36" height="0.9" fill="#7ab4b4"/><rect x="114" y="433" width="24" height="0.9" fill="#7ab4b4"/><rect x="114" y="436.5" width="18" height="0.9" fill="#7ab4b4"/><path d="M82 509 Q110 501 188 502 L188 509 Z" fill="url(#ow)"/><rect x="35" y="447.0" width="148.0" height="1.3" fill="#8c8c8c"/><rect x="35" y="451.0" width="148.0" height="1.3" fill="#8c8c8c"/><rect x="35" y="455.0" width="148.0" height="1.3" fill="#8c8c8c"/><rect x="35" y="459.0" width="74.0" height="1.3" fill="#8c8c8c"/><rect x="35" y="464.0" width="148.0" height="1.3" fill="#8c8c8c"/><rect x="35" y="468.0" width="88.8" height="1.3" fill="#8c8c8c"/><rect x="35" y="473.0" width="148.0" height="1.3" fill="#8c8c8c"/><rect x="35" y="477.0" width="148.0" height="1.3" fill="#8c8c8c"/><rect x="35" y="481.0" width="148.0" height="1.3" fill="#8c8c8c"/><rect x="35" y="486.0" width="148.0" height="1.3" fill="#8c8c8c"/><rect x="35" y="490.0" width="148.0" height="1.3" fill="#8c8c8c"/><rect x="35" y="494.0" width="148.0" height="1.3" fill="#8c8c8c"/><rect x="35" y="498.0" width="148.0" height="1.3" fill="#8c8c8c"/><rect x="35" y="502.0" width="59.2" height="1.3" fill="#8c8c8c"/><rect x="35" y="446.8" width="45" height="1.7" fill="#2a2a2a"/><rect x="35" y="472.8" width="50" height="1.7" fill="#2a2a2a"/><rect x="35" y="485.8" width="48" height="1.7" fill="#2a2a2a"/><rect x="35" y="497.8" width="80" height="1.7" fill="#2a2a2a"/><rect x="30" y="528" width="158" height="88" fill="#ffffff"/><path d="M30 528 L90 528 L90 534 Q60 535 30 538 Z" fill="url(#bw)"/><path d="M30 538 Q60 535 90 534 L90 536 Q60 537 30 540 Z" fill="#9cc8e8"/><rect x="85.5" y="528" width="102.5" height="23" fill="#0d6e70"/><rect x="86" y="551" width="102" height="1.5" fill="#d89a4a"/><rect x="94" y="529" width="5.5" height="3.5" fill="#f07828"/><rect x="100" y="532.5" width="5.5" height="3.5" fill="#f07828"/><rect x="106" y="536" width="5.5" height="3.5" fill="#f07828"/><rect x="88" y="532.5" width="5.5" height="3.5" fill="#1c9a98"/><rect x="94" y="536" width="5.5" height="3.5" fill="#1c9a98"/><rect x="100" y="539.5" width="5.5" height="3.5" fill="#1c9a98"/><rect x="88" y="539.5" width="5.5" height="3.5" fill="#0f8080"/><rect x="94" y="543" width="5.5" height="3.5" fill="#1c9a98"/><rect x="106" y="529" width="5.5" height="3.5" fill="#1c9a98"/><rect x="112" y="532.5" width="5.5" height="3.5" fill="#1c9a98"/><rect x="125" y="532.5" width="52" height="1" fill="#c8dede"/><rect x="114" y="536.5" width="36" height="0.9" fill="#7ab4b4"/><rect x="114" y="540" width="24" height="0.9" fill="#7ab4b4"/><rect x="114" y="543.5" width="18" height="0.9" fill="#7ab4b4"/><path d="M82 616 Q110 608 188 609 L188 616 Z" fill="url(#ow)"/><rect x="138" y="551" width="41" height="65" fill="#9a948e"/><rect x="138" y="551" width="41" height="65" fill="#cfcac4" opacity="0.35"/><ellipse cx="157" cy="566" rx="10" ry="9" fill="#2e2a28"/><ellipse cx="157" cy="571" rx="7.5" ry="9" fill="#b0a89e"/><path d="M151 569 L156 569 M158 569 L163 569" stroke="#4a4440" stroke-width="1.2"/><path d="M141 616 Q142 590 157 586 Q172 590 174 616 Z" fill="#6a645e"/><path d="M144 616 L147 590 L152 616 Z M171 616 L168 590 L162 616 Z" fill="#e0dcd6"/><rect x="40" y="554.0" width="65.7" height="1.3" fill="#808080"/><rect x="40" y="561.0" width="48.2" height="1.3" fill="#808080"/><rect x="40" y="568.0" width="48.2" height="1.3" fill="#808080"/><rect x="40" y="575.0" width="58.4" height="1.3" fill="#808080"/><rect x="56" y="574.8" width="25" height="1.7" fill="#2a2a2a"/><rect x="30" y="634" width="158" height="88" fill="#ffffff"/><path d="M30 634 L90 634 L90 640 Q60 641 30 644 Z" fill="url(#bw)"/><path d="M30 644 Q60 641 90 640 L90 642 Q60 643 30 646 Z" fill="#9cc8e8"/><rect x="85.5" y="634" width="102.5" height="23" fill="#0d6e70"/><rect x="86" y="657" width="102" height="1.5" fill="#d89a4a"/><rect x="94" y="635" width="5.5" height="3.5" fill="#f07828"/><rect x="100" y="638.5" width="5.5" height="3.5" fill="#f07828"/><rect x="106" y="642" width="5.5" height="3.5" fill="#f07828"/><rect x="88" y="638.5" width="5.5" height="3.5" fill="#1c9a98"/><rect x="94" y="642" width="5.5" height="3.5" fill="#1c9a98"/><rect x="100" y="645.5" width="5.5" height="3.5" fill="#1c9a98"/><rect x="88" y="645.5" width="5.5" height="3.5" fill="#0f8080"/><rect x="94" y="649" width="5.5" height="3.5" fill="#1c9a98"/><rect x="106" y="635" width="5.5" height="3.5" fill="#1c9a98"/><rect x="112" y="638.5" width="5.5" height="3.5" fill="#1c9a98"/><rect x="125" y="638.5" width="52" height="1" fill="#c8dede"/><rect x="114" y="642.5" width="36" height="0.9" fill="#7ab4b4"/><rect x="114" y="646" width="24" height="0.9" fill="#7ab4b4"/><rect x="114" y="649.5" width="18" height="0.9" fill="#7ab4b4"/><path d="M82 722 Q110 714 188 715 L188 722 Z" fill="url(#ow)"/><rect x="37" y="660" width="26" height="1.6" fill="#303030"/><rect x="37" y="664.0" width="116.2" height="1.3" fill="#8a8a8a"/><rect x="37" y="668.0" width="128.1" height="1.3" fill="#8a8a8a"/><rect x="37" y="671.5" width="82.0" height="1.3" fill="#8a8a8a"/><rect x="37" y="675.0" width="74.5" height="1.3" fill="#8a8a8a"/><rect x="37" y="679.0" width="116.2" height="1.3" fill="#8a8a8a"/><path d="M37 663 L39 664.5 L37 666 Z" fill="#303030"/><path d="M37 667 L39 668.5 L37 670 Z" fill="#303030"/><path d="M37 674 L39 675.5 L37 677 Z" fill="#303030"/><path d="M37 678 L39 679.5 L37 681 Z" fill="#303030"/><rect x="204" y="190" width="18" height="534" fill="#e9e8e8"/><rect x="207" y="193" width="12" height="530" fill="#dcdadb"/><rect x="207" y="193" width="12" height="178" fill="#ffffff" stroke="#d0d0d0" stroke-width="0.6"/><rect x="207" y="193" width="12" height="12" fill="#ffffff"/><path d="M210 201.5 L213 198 L216 201.5 Z" fill="#5a5a5a"/><rect x="207" y="205" width="12" height="1" fill="#d4d4d4"/><rect x="207.5" y="712" width="11" height="11" fill="#ffffff"/><path d="M210 715.5 L213 719 L216 715.5 Z" fill="#5a5a5a"/><rect x="222" y="190" width="1" height="534" fill="#d2d2d2"/><text x="10" y="214" font-family="Liberation Sans" font-size="11" fill="#c4432a">1</text><text x="10" y="321" font-family="Liberation Sans" font-size="11" fill="#6a6a6a">2</text><text x="10" y="428" font-family="Liberation Sans" font-size="11" fill="#6a6a6a">3</text><text x="10" y="535" font-family="Liberation Sans" font-size="11" fill="#6a6a6a">4</text><text x="10" y="641" font-family="Liberation Sans" font-size="11" fill="#6a6a6a">5</text></svg>
<div class="r" style="left:0px;top:723px;width:1280px;height:1px;background:#d6d6d6;"></div>
<div class="r" style="left:0px;top:724px;width:1280px;height:19px;background:#f3f1f0;"></div>
<div class="t" style="left:232.3px;top:665.87px;font-size:11.5px;color:#5e5e5e;transform:scaleX(1.0526315789473684);transform-origin:0 0;-webkit-text-stroke:0.2px #5e5e5e;">Щелкните, чтобы добавить заметки</div>
<div class="t" style="left:88px;top:222px;font-size:6px;color:#f4f4f4;font-weight:bold;transform:scaleX(0.68);transform-origin:0 0">ПІВДЕННО-УКРАЇНСЬКЕ ВІДДІЛЕННЯ</div>
<div class="t" style="left:78.5px;top:236px;font-size:7.5px;color:#d8a040;transform:scaleX(0.68);transform-origin:0 0">СОЦІОЛОГІЧНА</div>
<div class="t" style="left:68.5px;top:248.5px;font-size:7.5px;color:#d8a040;transform:scaleX(0.68);transform-origin:0 0">АСОЦІАЦІЯ</div>
<div class="t" style="left:60px;top:261.5px;font-size:7.5px;color:#d8a040;transform:scaleX(0.68);transform-origin:0 0">УКРАЇНИ</div>
<div class="t" style="left:7px;top:730.03px;font-size:10px;color:#7a7a7a;transform:scaleX(0.8412698412698413);transform-origin:0 0;">Слайд 1 из 15</div>
<div class="t" style="left:89px;top:730.03px;font-size:10px;color:#7a7a7a;transform:scaleX(0.8201058201058201);transform-origin:0 0;">русский</div>
<svg class="r" style="left:0;top:0" width="1280" height="745"><g fill="none" stroke="#6a6a6a" stroke-width="1"><path d="M837 731 L843 727.5 L849 731"/><path d="M836 734 L850 734 M836 737 L850 737 M836 740 L850 740"/></g><path d="M900.5 728.5 L912.5 728.5 L912.5 736.5 L905 736.5 L902 739.5 L902 736.5 L900.5 736.5 Z" fill="none" stroke="#6a6a6a" stroke-width="1"/><rect x="981" y="724" width="30" height="19" fill="#d4d2d0"/><g fill="none" stroke="#5a5a5a" stroke-width="1"><rect x="990.5" y="728.5" width="12" height="10"/><rect x="993" y="731" width="7" height="5"/></g><g fill="none" stroke="#6a6a6a" stroke-width="1"><rect x="1025.5" y="728.5" width="4.5" height="4"/><rect x="1032.5" y="728.5" width="4.5" height="4"/><rect x="1025.5" y="735" width="4.5" height="4"/><rect x="1032.5" y="735" width="4.5" height="4"/></g><g fill="none" stroke="#6a6a6a" stroke-width="1"><path d="M1058.5 728.5 L1064 729.5 L1069.5 728.5 L1069.5 739.5 L1064 738.5 L1058.5 739.5 Z M1064 729.5 L1064 738.5"/></g><g fill="none" stroke="#6a6a6a" stroke-width="1"><rect x="1091.5" y="728.5" width="11" height="6"/><path d="M1097 734.5 L1097 739 M1094 739.5 L1100 739.5"/></g><path d="M1118 733.5 L1123 733.5" stroke="#6a6a6a"/><rect x="1128" y="733" width="85" height="1" fill="#8a8a8a"/><rect x="1168.5" y="729" width="3" height="9" fill="#5a5a5a"/><path d="M1216.5 733.5 L1222.5 733.5 M1219.5 730.5 L1219.5 736.5" stroke="#6a6a6a"/><g fill="none" stroke="#6a6a6a" stroke-width="1"><path d="M1269 727 L1271.5 729.5 L1269 732 L1266.5 729.5 Z"/><rect x="1264" y="729.5" width="10" height="8"/><path d="M1262 733.5 L1264 731.5 M1262 733.5 L1264 735.5 M1276 733.5 L1274 731.5 M1276 733.5 L1274 735.5 M1269 740 L1267 738 M1269 740 L1271 738"/></g></svg>
<div class="t" style="left:852px;top:729.53px;font-size:10px;color:#5a5a5a;transform:scaleX(0.8421052631578947);transform-origin:0 0;">Заметки</div>
<div class="t" style="left:915px;top:729.53px;font-size:10px;color:#5a5a5a;transform:scaleX(0.8818342151675485);transform-origin:0 0;">Примечания</div>
<div class="t" style="left:1233px;top:729.53px;font-size:10px;color:#5a5a5a;transform:scaleX(0.9004739336492891);transform-origin:0 0;">99 %</div>
<svg class="r" style="left:0;top:0" width="1280" height="800" viewBox="0 0 1280 800"><g fill="none" stroke="#e6e6e6" stroke-width="1.6" stroke-linecap="round"><rect x="38" y="752" width="10" height="14" rx="5"/><path d="M34 763 Q34 771 43 771 Q52 771 52 763"/><path d="M43 771 L43 775 M38 775 L48 775"/></g><path d="M32 773 L53 752" stroke="#e0245e" stroke-width="2.2" stroke-linecap="round"/><path d="M67.5 764 L71.5 760 L75.5 764" fill="none" stroke="#d8d8d8" stroke-width="1.5" stroke-linecap="round" stroke-linejoin="round"/><g fill="none" stroke="#e6e6e6" stroke-width="1.6" stroke-linejoin="round"><rect x="111.5" y="756" width="15" height="13" rx="2.5"/><path d="M127 760.5 L133 756.5 L133 768.5 L127 764.5"/></g><path d="M112 772 L132 752" stroke="#e0245e" stroke-width="2.2" stroke-linecap="round"/><path d="M146.5 764 L150.5 760 L154.5 764" fill="none" stroke="#d8d8d8" stroke-width="1.5" stroke-linecap="round" stroke-linejoin="round"/><g fill="none" stroke="#e6e6e6" stroke-width="1.5"><circle cx="381.5" cy="759" r="3.5"/><path d="M376.5 771 L376.5 768 Q376.5 764.5 380 764.5 L383 764.5"/><circle cx="388" cy="762" r="3.2"/><path d="M382.5 771.5 Q382.5 767 386 767 L390 767 Q393.5 767 393.5 771.5 Z"/></g><text x="399" y="766" font-family="Liberation Sans" font-size="10.5" fill="#c8c8c8">12</text><path d="M421.5 764 L425.5 760 L429.5 764" fill="none" stroke="#d8d8d8" stroke-width="1.5" stroke-linecap="round" stroke-linejoin="round"/><g fill="none" stroke="#e6e6e6" stroke-width="1.5" stroke-linejoin="round"><path d="M471 757 Q471 754 474 754 L483 754 Q486 754 486 757 L486 764"/><path d="M466.5 762 Q466.5 758.5 470 758.5 L479 758.5 Q482.5 758.5 482.5 762 L482.5 767 Q482.5 770.5 479 770.5 L473 770.5 L469.5 773 L469.5 770.3 Q466.5 769.8 466.5 767 Z"/></g><g fill="#e6e6e6"><circle cx="471.5" cy="764.5" r="0.9"/><circle cx="474.5" cy="764.5" r="0.9"/><circle cx="477.5" cy="764.5" r="0.9"/></g><path d="M500.5 764 L504.5 760 L508.5 764" fill="none" stroke="#d8d8d8" stroke-width="1.5" stroke-linecap="round" stroke-linejoin="round"/><path d="M563.3 771 C556 766 552.5 762.5 552.5 759 C552.5 756 555 754.5 557.5 754.5 C560 754.5 562 756 563.3 758 C564.6 756 566.6 754.5 569 754.5 C571.6 754.5 574 756 574 759 C574 762.5 570.6 766 563.3 771 Z" fill="none" stroke="#e6e6e6" stroke-width="1.5" stroke-linejoin="round"/><path d="M595.5 764 L599.5 760 L603.5 764" fill="none" stroke="#d8d8d8" stroke-width="1.5" stroke-linecap="round" stroke-linejoin="round"/><rect x="639" y="753.5" width="21" height="17.5" rx="3" fill="#1fd17a"/><path d="M649.5 767 L649.5 758 M645.5 761.5 L649.5 757.5 L653.5 761.5" fill="none" stroke="#101010" stroke-width="2" stroke-linecap="round" stroke-linejoin="round"/><circle cx="772.3" cy="763" r="10" fill="none" stroke="#e6e6e6" stroke-width="1.5"/><circle cx="772.3" cy="758" r="1.2" fill="#e6e6e6"/><path d="M770 761 L773 761 L773 768 M770 768 L775.5 768" fill="none" stroke="#e6e6e6" stroke-width="1.5"/><g fill="none" stroke="#e6e6e6" stroke-width="1.5" stroke-linecap="round"><circle cx="903" cy="757" r="3.3"/><circle cx="891.5" cy="768.5" r="3.3"/><path d="M888 760 L888 757 Q888 753.5 891.5 753.5 L894.5 753.5"/><path d="M907 765.5 L907 769 Q907 772.5 903.5 772.5 L900 772.5"/></g><circle cx="985.5" cy="763" r="10" fill="none" stroke="#e6e6e6" stroke-width="1.5"/><g fill="#e6e6e6"><circle cx="981" cy="763" r="1.3"/><circle cx="985.5" cy="763" r="1.3"/><circle cx="990" cy="763" r="1.3"/></g><path d="M1239 752 L1252.5 751.5 L1252.5 772 L1239 772 Z" fill="#d81b5a"/><path d="M1241.5 754.5 L1250 754.5 L1250 769.5 L1241.5 769.5 Z" fill="#2a1420"/><path d="M1245 756.5 L1248.5 755.5 L1248.5 768.5 L1245 769 Z" fill="none" stroke="#9a2a50" stroke-width="0.8"/><g fill="#17181b" stroke="#f0f0f0" stroke-width="1.3" stroke-linejoin="round"><circle cx="1238.2" cy="756.2" r="2.6"/><path d="M1236.5 759.5 Q1239 758.8 1240.5 760.5 L1243.5 764 L1242.3 765 L1239.8 762.5 L1239.3 766.5 L1241 772.5 L1239 773 L1237 767.5 L1234.5 773 L1232.5 772.3 L1235.5 765.5 L1235.8 762.5 L1233.8 764.5 L1232.3 763.5 Z"/></g></svg>
<div class="t" style="left:-57.5px;width:200px;text-align:center;top:779.52px;font-size:11.2px;color:#d2d2d4;-webkit-text-stroke:0.25px #d2d2d4">Звук</div>
<div class="t" style="left:21.599999999999994px;width:200px;text-align:center;top:779.52px;font-size:11.2px;color:#d2d2d4;-webkit-text-stroke:0.25px #d2d2d4">Видео</div>
<div class="t" style="left:284.8px;width:200px;text-align:center;top:779.52px;font-size:11.2px;color:#d2d2d4;-webkit-text-stroke:0.25px #d2d2d4">Участники</div>
<div class="t" style="left:376px;width:200px;text-align:center;top:779.52px;font-size:11.2px;color:#d2d2d4;-webkit-text-stroke:0.25px #d2d2d4">Чат</div>
<div class="t" style="left:463.29999999999995px;width:200px;text-align:center;top:779.52px;font-size:11.2px;color:#d2d2d4;-webkit-text-stroke:0.25px #d2d2d4">Отреагировать</div>
<div class="t" style="left:549.3px;width:200px;text-align:center;top:779.52px;font-size:11.2px;color:#d2d2d4;-webkit-text-stroke:0.25px #d2d2d4">Поделиться</div>
<div class="t" style="left:671.8px;width:200px;text-align:center;top:779.52px;font-size:11.2px;color:#d2d2d4;-webkit-text-stroke:0.25px #d2d2d4">Информация о конференции</div>
<div class="t" style="left:796px;width:200px;text-align:center;top:779.52px;font-size:11.2px;color:#d2d2d4;-webkit-text-stroke:0.25px #d2d2d4">Приложения</div>
<div class="t" style="left:885.5px;width:200px;text-align:center;top:779.52px;font-size:11.2px;color:#d2d2d4;-webkit-text-stroke:0.25px #d2d2d4">Дополнительно</div>
<div class="t" style="left:1141px;width:200px;text-align:center;top:779.52px;font-size:11.2px;color:#d2d2d4;-webkit-text-stroke:0.25px #d2d2d4">Выйти</div>
<svg class="r" style="left:12px;top:691px" width="44" height="44" viewBox="0 0 44 44"><circle cx="22" cy="22" r="21.5" fill="#232325"/><path d="M13.5 26.5 L25.5 14.5 Q27 13 28.5 14.5 L29.5 15.5 Q31 17 29.5 18.5 L17.5 30.5 L13 31 Z M23.5 16.5 L27.5 20.5" fill="none" stroke="#2fd17e" stroke-width="1.6" stroke-linejoin="round"/><path d="M13 33.5 L31 33.5" stroke="#2fd17e" stroke-width="1.6"/></svg>
<div class="r" style="left:1063px;top:71px;width:217px;height:604px;background:#232323;border:1px solid #050505;border-radius:9px;"></div>
<svg class="r" style="left:1129px;top:89px;" width="86" height="86" viewBox="0 0 86 86"><defs><clipPath id="c1"><rect width="86" height="86" rx="9"/></clipPath><filter id="b1" x="-10%" y="-10%" width="120%" height="120%"><feGaussianBlur stdDeviation="1.3"/></filter><linearGradient id="mt" x1="0" y1="0" x2="0" y2="1"><stop offset="0" stop-color="#2a2c2e"/><stop offset="0.12" stop-color="#8c8e90"/><stop offset="0.22" stop-color="#5a5c5e"/><stop offset="0.45" stop-color="#4a4644"/><stop offset="0.62" stop-color="#555250"/><stop offset="0.75" stop-color="#262626"/><stop offset="1" stop-color="#1c1c1c"/></linearGradient><linearGradient id="dr" x1="0" y1="0" x2="1" y2="1"><stop offset="0" stop-color="#3a3c3e"/><stop offset="0.5" stop-color="#2a2c2e"/><stop offset="1" stop-color="#1e1f20"/></linearGradient></defs><g clip-path="url(#c1)"><rect width="86" height="86" fill="#232425"/><g filter="url(#b1)"><rect x="0" y="0" width="55" height="86" fill="url(#mt)"/><rect x="0" y="0" width="7" height="86" fill="#5c5e60"/><rect x="6" y="0" width="1.5" height="86" fill="#1a1a1a"/><rect x="10" y="0" width="45" height="13" fill="#121314"/><ellipse cx="30" cy="12" rx="3.5" ry="1.5" fill="#e8e8e8"/><ellipse cx="48" cy="12" rx="3.5" ry="1.5" fill="#e8e8e8"/><ellipse cx="17" cy="5" rx="3" ry="1.2" fill="#cfcfcf"/><ellipse cx="38" cy="5" rx="3" ry="1.2" fill="#bfbfbf"/><rect x="10" y="13" width="45" height="9" fill="#9a9c9e" opacity="0.75"/><ellipse cx="45" cy="38" rx="10" ry="6" fill="#8a7a60" opacity="0.55"/><rect x="8" y="52" width="25" height="5" fill="#8a8680" opacity="0.6"/><rect x="55" y="0" width="31" height="86" fill="url(#dr)"/><ellipse cx="37" cy="40" rx="5" ry="6.5" fill="#d8c090"/><path d="M31 36 Q34 31 38 33 L36 45 L31 47 Z" fill="#e0cca0"/><path d="M29 45 Q35 41 44 44 L54 56 L52 62 L38 66 L30 62 Z" fill="#1f1d1c"/><path d="M38 64 L49 63 L47 86 L38 86 Z" fill="#7a3028"/></g></g></svg>
<svg class="r" style="left:1071px;top:176px" width="12" height="13" viewBox="0 0 12 13"><rect x="4" y="0.5" width="4.5" height="7.5" rx="2.2" fill="#d9303a"/><path d="M2.2 5.5 Q2.2 9.8 6.2 9.8 Q10.2 9.8 10.2 5.5 M6.2 9.8 L6.2 12" fill="none" stroke="#d9303a" stroke-width="1.2"/><path d="M1.5 12.5 L11 1" stroke="#d9303a" stroke-width="1.3"/></svg>
<div class="t" style="left:1083px;top:176.69px;font-size:11px;color:#f2f2f2;-webkit-text-stroke:0.3px #f2f2f2">Арина Коваль</div>
<svg class="r" style="left:1066px;top:194px;" width="211" height="117" viewBox="0 0 211 117"><defs><filter id="b2" x="-5%" y="-5%" width="110%" height="110%"><feGaussianBlur stdDeviation="0.8"/></filter><filter id="b2h"><feGaussianBlur stdDeviation="1.6"/></filter></defs><rect width="211" height="117" fill="#5f5450"/><g filter="url(#b2)"><rect x="17" y="0" width="170" height="117" fill="#574c48"/><rect x="17" y="0" width="2.4" height="117" fill="#c9b291"/><rect x="23.5" y="0" width="2.4" height="117" fill="#c9b291"/><rect x="29.5" y="0" width="2.4" height="117" fill="#c9b291"/><rect x="36" y="0" width="2.4" height="117" fill="#c9b291"/><rect x="42" y="0" width="2.4" height="117" fill="#c9b291"/><rect x="48" y="0" width="2.4" height="117" fill="#c9b291"/><rect x="105" y="0" width="2.4" height="117" fill="#c9b291"/><rect x="111" y="0" width="2.4" height="117" fill="#c9b291"/><rect x="117" y="0" width="2.4" height="117" fill="#c9b291"/><rect x="123" y="36" width="2.4" height="39" fill="#c9b291"/><rect x="129" y="36" width="2.4" height="39" fill="#c9b291"/><rect x="135" y="36" width="2.4" height="39" fill="#c9b291"/><rect x="129" y="78" width="2.4" height="22" fill="#c9b291"/><rect x="135" y="78" width="2.4" height="22" fill="#c9b291"/><rect x="184.5" y="0" width="2.6" height="117" fill="#d2bea0"/><rect x="18" y="33" width="170" height="3" fill="#2a2220"/><rect x="18" y="75" width="170" height="3.5" fill="#2a2220"/><rect x="18" y="1" width="12" height="31" fill="#e6e0d6"/><rect x="40" y="22" width="14" height="10" fill="#ddd6cc"/><rect x="54" y="26" width="17" height="6" fill="#e4ded6"/><rect x="80" y="6" width="2.6" height="26" fill="#b8a68a"/><circle cx="81.3" cy="5" r="1.7" fill="#c8b698"/><rect x="84.5" y="6" width="2.6" height="26" fill="#b8a68a"/><circle cx="85.8" cy="5" r="1.7" fill="#c8b698"/><rect x="89" y="6" width="2.6" height="26" fill="#b8a68a"/><circle cx="90.3" cy="5" r="1.7" fill="#c8b698"/><rect x="93.5" y="6" width="2.6" height="26" fill="#b8a68a"/><circle cx="94.8" cy="5" r="1.7" fill="#c8b698"/><rect x="98" y="6" width="2.6" height="26" fill="#b8a68a"/><circle cx="99.3" cy="5" r="1.7" fill="#c8b698"/><rect x="78" y="30" width="24" height="3" fill="#d8d0c4"/><path d="M117 20 L128 12 L140 22 L138 30 L120 30 Z" fill="#d8d0c4"/><rect x="114" y="30" width="33" height="3.5" fill="#e0d8cc"/><rect x="124" y="1" width="14" height="10" fill="#e6e2da"/><rect x="155" y="15" width="28" height="4" fill="#d8d2c8"/><rect x="155" y="20" width="28" height="5" fill="#cfc8bc"/><rect x="155" y="26" width="28" height="6" fill="#dcd6cc"/><path d="M56 49 L63 49 L61 75 L58 75 Z" fill="#c8b28e"/><path d="M66 44 L73 44 L71 75 L68 75 Z" fill="#bca884"/><path d="M161 72 L161 55 L165 44 L169 55 L169 72 Z" fill="none" stroke="#b8a68a" stroke-width="1.6"/><circle cx="134" cy="68" r="6" fill="#9a8a72"/><rect x="38" y="79" width="12" height="21" fill="#e2dcd2"/><rect x="155" y="90" width="6" height="27" fill="#e0dad0"/><rect x="161" y="94" width="5" height="23" fill="#cfc6b6"/><rect x="166" y="96" width="6" height="21" fill="#e8e2d8"/><rect x="172" y="88" width="5" height="29" fill="#bfb4a0"/></g><g filter="url(#b2h)"><path d="M69 117 L71 62 Q73 33 98 33 Q122 34 125 62 L127 100 L121 117 Z" fill="#cfc9bf"/><path d="M110 40 Q124 48 125 70 L126 104 L116 110 Z" fill="#8a8078"/><path d="M80 62 Q81 45 98 44 Q115 45 116 63 L115 82 Q112 100 98 100 Q84 100 81 82 Z" fill="#c9a48c"/><path d="M78 58 Q82 38 99 38 Q112 38 118 52 Q108 47 97 48 Q85 50 78 58 Z" fill="#ddd8d0"/><path d="M86 64 L93 63.5 M103 63.5 L110 64" stroke="#5a4038" stroke-width="1.6"/><path d="M92 85 Q98 86.5 104 85" stroke="#a06050" stroke-width="1.4" fill="none"/><path d="M62 117 Q66 100 82 97 L92 104 L106 104 L116 96 Q138 98 150 117 Z" fill="#222021"/><path d="M90 117 L92 106 L106 106 L108 117 Z" fill="#ecebe8"/></g></svg>
<div class="r" style="left:1064px;top:192px;width:215px;height:122px;background:transparent;border:2px solid #30cd4e;"></div>
<div class="r" style="left:1066px;top:293px;width:69px;height:18px;background:rgba(28,26,26,0.82);"></div>
<div class="t" style="left:1068px;top:295.69px;font-size:11px;color:#f2f2f2;-webkit-text-stroke:0.3px #f2f2f2">Inna Pronoza</div>
<svg class="r" style="left:1065px;top:314px;" width="212" height="118" viewBox="0 0 212 118"><defs><filter id="b3" x="-10%" y="-10%" width="120%" height="120%"><feGaussianBlur stdDeviation="1.5"/></filter><filter id="b3s"><feGaussianBlur stdDeviation="0.6"/></filter><linearGradient id="w3" x1="0" x2="1"><stop offset="0" stop-color="#dcd8d2"/><stop offset="1" stop-color="#cfcbcc"/></linearGradient></defs><rect width="212" height="118" fill="url(#w3)"/><g filter="url(#b3s)"><rect x="0" y="1" width="12" height="41" fill="#a8a096"/><rect x="1" y="4" width="8" height="35" fill="#c4b49a"/><rect x="127" y="0" width="85" height="118" fill="#3c3636"/><rect x="127" y="0" width="80" height="12" fill="#2a2626"/><rect x="140" y="2" width="6" height="9" fill="#d8d8d8"/><rect x="127" y="12" width="78" height="4.5" fill="#e6e6e8"/><rect x="127" y="48" width="78" height="5" fill="#e6e6e8"/><rect x="134" y="20" width="7" height="26" fill="#d2c8bc"/><rect x="142" y="18" width="5" height="28" fill="#8a7a68"/><rect x="147" y="22" width="7" height="24" fill="#6a2424"/><rect x="154" y="20" width="5" height="26" fill="#b89a80"/><rect x="159" y="19" width="8" height="27" fill="#2e2828"/><rect x="169" y="17" width="8" height="29" fill="#e6e4e4"/><rect x="178" y="16" width="25" height="31" fill="#242022"/><path d="M186 24 Q191 19 195 25 L193 31 L197 38 L184 38 L188 31 Z" fill="#d4d0d2"/><rect x="202" y="0" width="8" height="118" fill="#e8e8ec"/><rect x="210" y="0" width="2" height="118" fill="#3a3a3a"/><path d="M131 118 L132 68 Q150 58 178 60 Q196 64 198 84 L198 118 Z" fill="#b9a79e"/></g><g filter="url(#b3)"><path d="M30 118 L36 44 Q40 2 88 1 Q134 2 138 44 L136 80 L124 96 L110 118 Z" fill="#e6dde2"/><path d="M56 38 Q58 6 88 5 Q118 6 121 38 L120 55 Q116 78 88 78 Q60 78 57 55 Z" fill="#cf9f9e"/><path d="M64 16 L80 14 M96 14 L112 16" stroke="#8a5a5a" stroke-width="2.2"/><path d="M68 25 L78 25 M98 25 L108 25" stroke="#5a3a3e" stroke-width="2.6"/><path d="M72 57 Q86 60 99 57" stroke="#a8404a" stroke-width="3.5" fill="none"/><path d="M6 118 Q12 88 42 78 L60 76 Q88 96 116 78 L150 80 Q180 90 196 118 Z" fill="#1a181c"/><path d="M48 82 Q88 112 122 80" fill="none" stroke="#d8ccc8" stroke-width="3"/><path d="M118 56 L120 106" stroke="#d6d2d6" stroke-width="4" stroke-dasharray="4 2"/></g></svg>
<div class="r" style="left:1067px;top:414px;width:94px;height:18px;background:rgba(24,22,24,0.8);border-radius:0 4px 0 0;"></div>
<svg class="r" style="left:1071px;top:415.3px" width="12" height="13" viewBox="0 0 12 13"><rect x="4" y="0.5" width="4.5" height="7.5" rx="2.2" fill="#d9303a"/><path d="M2.2 5.5 Q2.2 9.8 6.2 9.8 Q10.2 9.8 10.2 5.5 M6.2 9.8 L6.2 12" fill="none" stroke="#d9303a" stroke-width="1.2"/><path d="M1.5 12.5 L11 1" stroke="#d9303a" stroke-width="1.3"/></svg>
<div class="t" style="left:1083px;top:415.99px;font-size:11px;color:#f2f2f2;-webkit-text-stroke:0.3px #f2f2f2">Elena Liseienko</div>
<svg class="r" style="left:1123px;top:444px;" width="98" height="96" viewBox="0 0 98 96"><defs><clipPath id="c4"><rect width="98" height="96" rx="9"/></clipPath><filter id="b4" x="-10%" y="-10%" width="120%" height="120%"><feGaussianBlur stdDeviation="1.3"/></filter></defs><g clip-path="url(#c4)"><rect width="98" height="96" fill="#3e3a3a"/><g filter="url(#b4)"><rect x="0" y="0" width="10" height="96" fill="#7a3a2e"/><rect x="10" y="0" width="12" height="96" fill="#4a4846"/><rect x="68" y="0" width="30" height="42" fill="#2e3448"/><rect x="72" y="3" width="4" height="34" fill="#d8d8e0"/><rect x="77" y="6" width="5" height="34" fill="#3a4a8a"/><rect x="83" y="10" width="4" height="30" fill="#b02838"/><rect x="88" y="5" width="4" height="34" fill="#e0e0e8"/><rect x="66" y="40" width="32" height="5" fill="#8a6a50"/><rect x="66" y="45" width="32" height="51" fill="#4a3c34"/><rect x="70" y="62" width="28" height="18" fill="#9aa4b0"/><path d="M8 96 L12 36 Q18 2 48 2 Q78 2 82 38 L84 96 Z" fill="#d6b584"/><path d="M28 40 Q30 14 50 14 Q70 14 72 40 L71 58 Q68 80 50 80 Q32 80 29 58 Z" fill="#e4bca4"/><path d="M36 44 L44 44 M56 44 L64 44" stroke="#5a5040" stroke-width="2"/><path d="M44 64 Q50 66 56 64" stroke="#c07a78" stroke-width="2" fill="none"/><path d="M22 30 Q30 8 50 8 Q72 8 78 36 Q66 18 50 20 Q34 22 22 30 Z" fill="#cfa874"/><path d="M30 96 Q40 84 54 84 Q76 84 90 96 Z" fill="#e8e4de"/></g></g></svg>
<div class="r" style="left:1067px;top:533px;width:100px;height:17px;background:rgba(28,28,28,0.88);border-radius:0 4px 0 0;"></div>
<svg class="r" style="left:1071px;top:535.5px" width="12" height="13" viewBox="0 0 12 13"><rect x="4" y="0.5" width="4.5" height="7.5" rx="2.2" fill="#d9303a"/><path d="M2.2 5.5 Q2.2 9.8 6.2 9.8 Q10.2 9.8 10.2 5.5 M6.2 9.8 L6.2 12" fill="none" stroke="#d9303a" stroke-width="1.2"/><path d="M1.5 12.5 L11 1" stroke="#d9303a" stroke-width="1.3"/></svg>
<div class="t" style="left:1083px;top:536.19px;font-size:11px;color:#f2f2f2;-webkit-text-stroke:0.3px #f2f2f2">Світлана Швець</div>
<div class="t" style="left:1092.7px;top:603.99px;font-size:17.5px;color:#f2f2f2">Левенець Михайло</div>
<svg class="r" style="left:1071px;top:655.5px" width="12" height="13" viewBox="0 0 12 13"><rect x="4" y="0.5" width="4.5" height="7.5" rx="2.2" fill="#d9303a"/><path d="M2.2 5.5 Q2.2 9.8 6.2 9.8 Q10.2 9.8 10.2 5.5 M6.2 9.8 L6.2 12" fill="none" stroke="#d9303a" stroke-width="1.2"/><path d="M1.5 12.5 L11 1" stroke="#d9303a" stroke-width="1.3"/></svg>
<div class="t" style="left:1083px;top:656.19px;font-size:11px;color:#f2f2f2;-webkit-text-stroke:0.3px #f2f2f2">Левенець Михайло</div>
</body></html>
